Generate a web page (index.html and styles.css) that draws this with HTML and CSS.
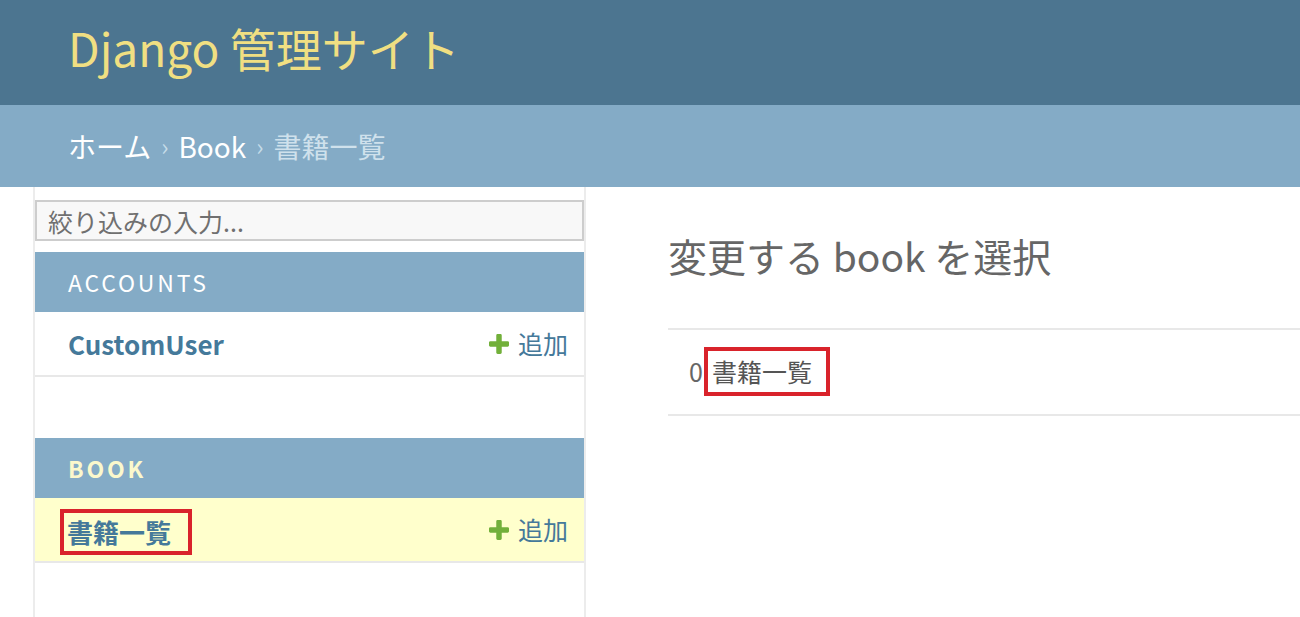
FILE: index.html
```html
<!DOCTYPE html>
<html lang="ja">
<head>
<meta charset="utf-8">
<title>書籍一覧 | Django 管理サイト</title>
<link rel="stylesheet" href="styles.css">
</head>
<body>
<header class="header">
  <div class="site-name">Django 管理サイト</div>
</header>
<nav class="breadcrumbs">
  <a class="crumb-link" href="#">ホーム</a>
  <span class="sep">›</span>
  <a class="crumb-link" href="#">Book</a>
  <span class="sep">›</span>
  <span class="crumb-current">書籍一覧</span>
</nav>
<div class="layout">
  <aside class="sidebar">
    <input class="filter" type="search" placeholder="絞り込みの入力...">
    <div class="module">
      <div class="caption">Accounts</div>
      <div class="row">
        <a class="model-link" href="#">CustomUser</a>
        <a class="add-link" href="#">
          <svg class="plus" viewBox="192 192 1408 1408" aria-hidden="true"><path d="M1600 796v192q0 40-28 68t-68 28h-416v416q0 40-28 68t-68 28h-192q-40 0-68-28t-28-68v-416h-416q-40 0-68-28t-28-68v-192q0-40 28-68t68-28h416v-416q0-40 28-68t68-28h192q40 0 68 28t28 68v416h416q40 0 68 28t28 68z"/></svg>
          <span>追加</span>
        </a>
      </div>
    </div>
    <div class="module module-gap">
      <div class="caption caption-current">Book</div>
      <div class="row row-current">
        <a class="model-link mark-side" href="#">書籍一覧</a>
        <a class="add-link" href="#">
          <svg class="plus" viewBox="192 192 1408 1408" aria-hidden="true"><path d="M1600 796v192q0 40-28 68t-68 28h-416v416q0 40-28 68t-68 28h-192q-40 0-68-28t-28-68v-416h-416q-40 0-68-28t-28-68v-192q0-40 28-68t68-28h416v-416q0-40 28-68t68-28h192q40 0 68 28t28 68v416h416q40 0 68 28t28 68z"/></svg>
          <span>追加</span>
        </a>
      </div>
    </div>
  </aside>
  <main class="content">
    <h1 class="title">変更する book を選択</h1>
    <div class="result-table">
      <div class="result-row">
        <span class="count">0</span><span class="mark-main">書籍一覧</span>
      </div>
    </div>
  </main>
</div>
</body>
</html>
```
FILE: styles.css
```css
* { box-sizing: border-box; }

html, body {
  margin: 0;
  padding: 0;
  background: #fff;
  font-family: "Noto Sans CJK JP", "Noto Sans", sans-serif;
  overflow: hidden;
}

a { text-decoration: none; }

.header {
  height: 105px;
  background: #4c7590;
  display: flex;
  align-items: center;
  padding: 0 0 12px 68px;
}

.site-name {
  font-size: 46px;
  line-height: 1;
  color: #f0df82;
  font-weight: 400;
}

.breadcrumbs {
  height: 82px;
  background: #84abc6;
  display: flex;
  align-items: center;
  padding-left: 68px;
  font-size: 28px;
  line-height: 1;
  gap: 10px;
}

.crumb-link { color: #fff; }
.sep { color: #c4dce8; font-size: 24px; }
.crumb-current { color: #cfe1ec; }

.layout {
  display: flex;
  align-items: flex-start;
}

.sidebar {
  margin-left: 33px;
  width: 553px;
  flex: none;
  border-left: 2px solid #ececec;
  border-right: 2px solid #ececec;
  padding-top: 13px;
  height: 430px;
}

.filter {
  display: block;
  width: 100%;
  height: 41px;
  margin: 0;
  border: 2px solid #cdcdcd;
  background: #f8f8f8;
  padding: 0 0 0 11px;
  font-family: inherit;
  font-size: 25px;
  color: #333;
  outline: none;
}

.filter::placeholder { color: #707070; }

.module { margin-top: 11px; }
.module-gap { margin-top: 61px; }

.caption {
  height: 60px;
  background: #84abc6;
  color: #fff;
  display: flex;
  align-items: center;
  padding-left: 33px;
  font-size: 23px;
  letter-spacing: 2.8px;
  text-transform: uppercase;
  line-height: 1;
}

.caption-current {
  color: #fbf8cc;
  font-weight: 700;
}

.row {
  height: 65px;
  border-bottom: 2px solid #e8e8e8;
  display: flex;
  align-items: center;
  justify-content: space-between;
  padding: 0 16px 0 33px;
}

.row-current { background: #ffffcc; }

.model-link {
  color: #45799a;
  font-weight: 700;
  font-size: 26px;
  line-height: 1;
}

.add-link {
  display: flex;
  align-items: center;
  gap: 9px;
  color: #45799a;
  font-size: 25px;
  line-height: 1;
}

.plus {
  width: 20px;
  height: 20px;
  fill: #72b03a;
}

.mark-side {
  display: inline-block;
  border: 4px solid #d9232b;
  padding: 6px 17px 6px 3px;
  margin-left: -8px;
  margin-top: 4px;
}

.content {
  flex: 1;
  padding: 45px 0 0 82px;
}

.title {
  margin: 0;
  font-size: 39px;
  line-height: 1.2;
  font-weight: 400;
  color: #666;
}

.result-table {
  margin-top: 49px;
  border-top: 2px solid #e8e8e8;
  border-bottom: 2px solid #e8e8e8;
}

.result-row {
  height: 84px;
  display: flex;
  align-items: center;
  padding-left: 21px;
  font-size: 25px;
  line-height: 1;
  color: #666;
}

.count { color: #666; }

.mark-main {
  display: inline-block;
  border: 4px solid #d9232b;
  padding: 8px 14px 8px 4px;
  margin-left: 1px;
  color: #555;
}
```
